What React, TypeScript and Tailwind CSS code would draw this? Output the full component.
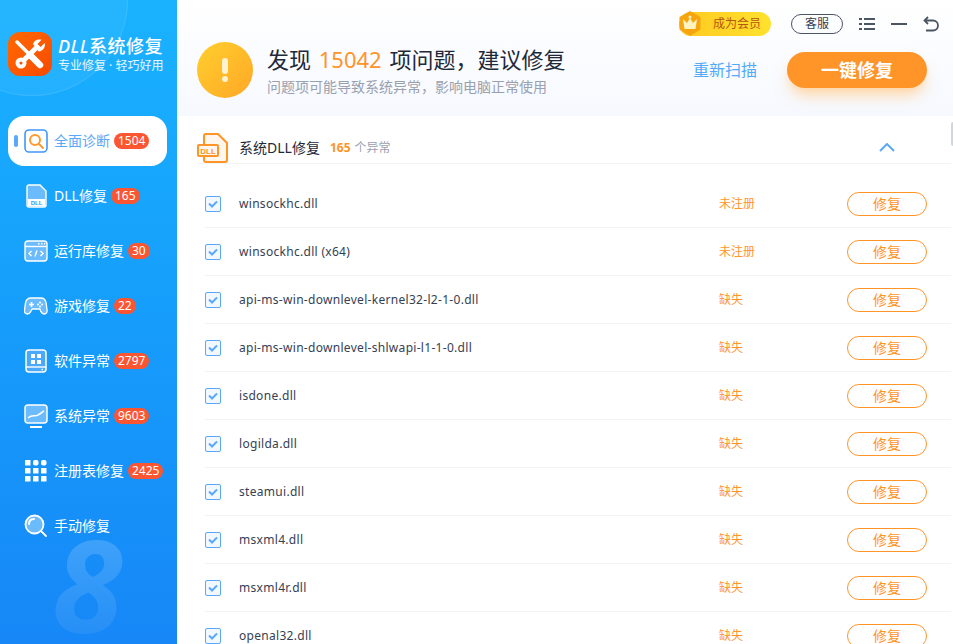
import type { ReactNode } from 'react'

const font = { fontFamily: '"Noto Sans", "Noto Sans CJK SC", sans-serif' }

function SearchBoxIcon() {
  return (
    <svg width="24" height="24" viewBox="0 0 24 24" fill="none">
      <rect x="1" y="1" width="22" height="22" rx="4" stroke="#3f97fb" strokeWidth="1.6" />
      <circle cx="11" cy="11" r="5" stroke="#ff9a2e" strokeWidth="2" />
      <path d="M15 15l4 4" stroke="#ff9a2e" strokeWidth="2" strokeLinecap="round" />
    </svg>
  )
}

function DllIcon() {
  return (
    <svg width="24" height="24" viewBox="0 0 24 24" fill="none">
      <path d="M5 1h11l6 6v14a2 2 0 0 1-2 2H5a2 2 0 0 1-2-2V3a2 2 0 0 1 2-2z" fill="#6cbcfd" stroke="#fff" strokeWidth="1.4" />
      <rect x="4" y="15" width="17" height="7" fill="#fff" />
      <text x="12.5" y="21" textAnchor="middle" fontSize="6" fontWeight="700" fill="#2f9cf8" fontFamily="Liberation Sans">DLL</text>
    </svg>
  )
}

function RuntimeIcon() {
  return (
    <svg width="24" height="24" viewBox="0 0 24 24" fill="none">
      <rect x="1" y="2" width="22" height="20" rx="3" fill="#6cbcfd" stroke="#fff" strokeWidth="1.4" />
      <path d="M1 7.5h22" stroke="#fff" strokeWidth="1.4" />
      <path d="M14 4.8h1.5M17 4.8h1.5M20 4.8h1.2" stroke="#fff" strokeWidth="1.4" />
      <path d="M7.5 12l-2.5 2.5L7.5 17M16.5 12l2.5 2.5-2.5 2.5M13 11.5l-2 6" stroke="#fff" strokeWidth="1.4" />
    </svg>
  )
}

function GameIcon() {
  return (
    <svg width="24" height="20" viewBox="0 0 24 20" fill="none">
      <path d="M7 2h10c3 0 5 2 5.500 5l1 7c.4 2.500-1 4-3 4-1.500 0-2.500-1-3.500-2.500L16 13H8l-1.500 2.500C5.500 17 4.500 18 3 18c-2 0-3.400-1.500-3-4l1-7c.5-3 3-5 6-5z" fill="#6cbcfd" stroke="#fff" strokeWidth="1.4" transform="translate(.5 0) scale(.96 1)" />
      <path d="M5 8.500h5M7.500 6v5" stroke="#fff" strokeWidth="1.6" />
      <circle cx="16" cy="6.500" r="1" fill="#fff" />
      <circle cx="16" cy="10.500" r="1" fill="#fff" />
      <circle cx="14" cy="8.500" r="1" fill="#fff" />
      <circle cx="18" cy="8.500" r="1" fill="#fff" />
    </svg>
  )
}

function SoftwareIcon() {
  return (
    <svg width="22" height="24" viewBox="0 0 22 24" fill="none">
      <rect x="1" y="1" width="20" height="22" rx="3" fill="#4aa9fb" stroke="#fff" strokeWidth="1.5" />
      <rect x="6" y="5" width="4" height="4" fill="#fff" />
      <rect x="12" y="5" width="4" height="4" fill="#fff" />
      <rect x="6" y="11" width="4" height="4" fill="#fff" />
      <rect x="12" y="11" width="4" height="4" fill="#fff" />
      <path d="M1 18h20" stroke="#fff" strokeWidth="1.4" />
      <rect x="16.5" y="19.8" width="1.5" height="1.5" fill="#fff" />
    </svg>
  )
}

function MonitorIcon() {
  return (
    <svg width="24" height="24" viewBox="0 0 24 24" fill="none">
      <rect x="1" y="1" width="22" height="18" rx="3" fill="#6cbcfd" stroke="#fff" strokeWidth="1.5" />
      <path d="M4 14c4-4 7-1 10-3 3-1.500 4-3 6-4" stroke="#fff" strokeWidth="1.5" />
      <path d="M6 23h12" stroke="#fff" strokeWidth="2" />
    </svg>
  )
}

function GridIcon() {
  return (
    <svg width="22" height="22" viewBox="0 0 22 22" fill="#fff">
      {[0, 8, 16].map((y) =>
        [0, 8, 16].map((x) => (
          <rect key={x + '-' + y} x={x} y={y} width="5.5" height="5.5" rx={y === 0 && x > 0 ? 2 : 0.5} />
        )),
      )}
    </svg>
  )
}

function LensIcon() {
  return (
    <svg width="24" height="24" viewBox="0 0 24 24" fill="none">
      <circle cx="10.5" cy="10.5" r="9" fill="#6cbcfd" stroke="#fff" strokeWidth="1.8" />
      <path d="M5 10c0-3 2-5 5-5" stroke="#fff" strokeWidth="2" strokeLinecap="round" />
      <path d="M17.5 17.5l4.500 4.500" stroke="#fff" strokeWidth="1.8" strokeLinecap="round" />
    </svg>
  )
}

function Logo() {
  return (
    <div className="flex h-11 w-11 items-center justify-center rounded-xl bg-gradient-to-br from-orange-500 to-orange-600">
      <svg width="36" height="36" viewBox="0 0 36 36" fill="none">
        {/* screwdriver */}
        <path d="M5 6l12 12" stroke="#fff" strokeWidth="3.5" strokeLinecap="round" />
        <path d="M19 20l9 9" stroke="#fff" strokeWidth="6.5" strokeLinecap="round" />
        {/* wrench */}
        <path d="M26 10L10 26" stroke="#fff" strokeWidth="5" />
        <circle cx="9" cy="27" r="5.5" fill="#fff" />
        <circle cx="9" cy="27" r="1.6" fill="#f4590a" />
        <path d="M21 8c1-3.500 4.500-5.500 8.500-4.200L25.500 8l3 3 4.200-4c1 4-1.500 8-6 8.500z" fill="#fff" />
      </svg>
    </div>
  )
}

const navItems: { label: string; count?: number; icon: ReactNode; active?: boolean }[] = [
  { label: '全面诊断', count: 1504, icon: <SearchBoxIcon />, active: true },
  { label: 'DLL修复', count: 165, icon: <DllIcon /> },
  { label: '运行库修复', count: 30, icon: <RuntimeIcon /> },
  { label: '游戏修复', count: 22, icon: <GameIcon /> },
  { label: '软件异常', count: 2797, icon: <SoftwareIcon /> },
  { label: '系统异常', count: 9603, icon: <MonitorIcon /> },
  { label: '注册表修复', count: 2425, icon: <GridIcon /> },
  { label: '手动修复', icon: <LensIcon /> },
]

const rows = [
  ['winsockhc.dll', '未注册'],
  ['winsockhc.dll (x64)', '未注册'],
  ['api-ms-win-downlevel-kernel32-l2-1-0.dll', '缺失'],
  ['api-ms-win-downlevel-shlwapi-l1-1-0.dll', '缺失'],
  ['isdone.dll', '缺失'],
  ['logilda.dll', '缺失'],
  ['steamui.dll', '缺失'],
  ['msxml4.dll', '缺失'],
  ['msxml4r.dll', '缺失'],
  ['openal32.dll', '缺失'],
]

function Sidebar() {
  return (
    <aside className="relative flex w-[177px] shrink-0 flex-col overflow-hidden bg-gradient-to-b from-[#1ab2ff] to-[#1787f7] pl-2 pr-2.5 text-white">
      <div className="absolute -left-16 -top-24 h-48 w-48 rounded-full border border-white/10 bg-white/5" />
      <div className="absolute -bottom-1 left-13 bg-gradient-to-b from-white/20 to-white/5 bg-clip-text text-9xl font-bold italic leading-none text-transparent">
        8
      </div>
      <div className="relative flex items-center gap-1.5 pb-10 pt-8">
        <Logo />
        <div>
          <div className="whitespace-nowrap text-lg font-medium leading-6 tracking-wide"><span className="italic">DLL</span>系统修复</div>
          <div className="whitespace-nowrap text-xs leading-4 text-white/90">专业修复 · 轻巧好用</div>
        </div>
      </div>
      <nav className="relative flex flex-col gap-1.25">
        {navItems.map((item) => (
          <div
            key={item.label}
            className={
              'relative flex h-12.5 items-center gap-1.5 rounded-2xl pl-4 text-sm ' +
              (item.active ? 'bg-white text-[#5aa9f8]' : 'text-white')
            }
          >
            {item.active && <span className="absolute left-1.5 h-3 w-1 rounded-full bg-[#5aa9f8]" />}
            <span className="flex w-6 justify-center">{item.icon}</span>
            <span className="whitespace-nowrap">{item.label}</span>
            {item.count !== undefined && (
              <span className="-ml-0.5 rounded-full bg-[#fb5532] px-1 text-xs leading-4 text-white">{item.count}</span>
            )}
          </div>
        ))}
      </nav>
    </aside>
  )
}

function Header() {
  return (
    <header className="relative h-29 shrink-0 bg-gradient-to-b from-white to-[#f6f9ff]">
      <div className="flex items-center justify-end gap-4 pr-3.5 pt-3">
        <div className="relative mr-1 flex h-6 w-23 items-center justify-end rounded-full bg-gradient-to-r from-[#ffc91f] to-[#ffe22e] pr-2.5 text-xs text-[#b5560f]">
          <svg className="absolute -left-0.5 -top-px" width="26" height="26" viewBox="0 0 26 26">
            <path d="M13 0l10.500 6v12.500L13 25 2.500 18.500V6z" fill="#f6a50f" />
            <path d="M6 8l4 4 3-5 3 5 4-4-1.500 10h-11z" fill="#fff3c0" />
            <circle cx="13" cy="6" r="1.5" fill="#fff3c0" />
          </svg>
          成为会员
        </div>
        <div className="flex h-5 w-13 items-center justify-center rounded-full border border-gray-600 text-xs text-gray-700">客服</div>
        <svg width="16" height="14" viewBox="0 0 16 14" stroke="#4b5563" strokeWidth="2">
          <path d="M0 2h3M5 2h11M0 7h3M5 7h11M0 12h3M5 12h11" />
        </svg>
        <svg width="16" height="14" viewBox="0 0 16 14" stroke="#4b5563" strokeWidth="2">
          <path d="M0 7h16" />
        </svg>
        <svg width="16" height="16" viewBox="0 0 16 16" fill="none" stroke="#4b5563" strokeWidth="1.8">
          <path d="M5 1L1.500 4.500 5 8M2 4.500h8a4.500 4.500 0 0 1 0 10H3" />
        </svg>
      </div>
      <div className="flex items-center pl-5 pr-6.5 pt-1.5">
        <div className="flex h-14 w-14 items-center justify-center rounded-full bg-gradient-to-br from-[#ffcf2e] to-[#ffa726]">
          <div className="flex flex-col items-center gap-0.5">
            <span className="h-4 w-1.5 rounded-full bg-[#fff2cf]" />
            <span className="h-1.5 w-1.5 rounded-full bg-[#fff2cf]" />
          </div>
        </div>
        <div className="ml-3.5">
          <h1 className="text-[22px] font-normal leading-8 text-gray-800">
            发现 <span className="mx-0.5 text-[#ff9429]">15042</span> 项问题，建议修复
          </h1>
          <p className="mt-0.5 text-sm leading-5 text-gray-400">问题项可能导致系统异常，影响电脑正常使用</p>
        </div>
        <div className="ml-auto text-base text-[#55a9f9]">重新扫描</div>
        <button className="ml-7.5 h-9 w-35 rounded-full bg-[#ff9429] text-lg font-bold text-white shadow-lg shadow-orange-200">一键修复</button>
      </div>
    </header>
  )
}

function SectionHead() {
  return (
    <div className="ml-5 mr-0.5 flex h-12 shrink-0 items-center border-b border-gray-100 pr-14 pt-4">
      <svg width="32" height="32" viewBox="0 0 32 32" fill="none">
        <path d="M9 2h12l9 9v17a2 2 0 0 1-2 2H9a2 2 0 0 1-2-2V4a2 2 0 0 1 2-2z" fill="#fff6ee" stroke="#ff9429" strokeWidth="2" />
        <rect x="1" y="13" width="20" height="11" rx="1" fill="#fff6ee" stroke="#ff9429" strokeWidth="2" />
        <text x="11" y="22" textAnchor="middle" fontSize="8" fontWeight="700" fill="#ff9429" fontFamily="Liberation Sans">DLL</text>
      </svg>
      <span className="ml-2.5 text-sm text-gray-800">系统DLL修复</span>
      <span className="ml-2.5 text-xs font-bold text-[#ff9429]">165</span>
      <span className="ml-1 text-xs text-gray-400">个异常</span>
      <svg className="ml-auto" width="16" height="9" viewBox="0 0 16 9" fill="none" stroke="#5aa9f8" strokeWidth="2">
        <path d="M1 8l7-7 7 7" />
      </svg>
    </div>
  )
}

function Row({ name, status }: { name: string; status: string }) {
  return (
    <div className="ml-7 mr-0.5 flex h-12 shrink-0 items-center border-b border-gray-100 pr-6">
      <span className="flex h-4 w-4 items-center justify-center rounded-xs border border-[#5aa9f8] bg-[#f3f8ff]">
        <svg width="10" height="8" viewBox="0 0 10 8" fill="none" stroke="#5aa9f8" strokeWidth="2">
          <path d="M1 3.500L4 6.500 9 1.500" />
        </svg>
      </span>
      <span className="ml-4.5 flex-1 text-xs tracking-wide text-gray-700">{name}</span>
      <span className="w-32 text-xs text-[#ff9429]">{status}</span>
      <button className="h-6 w-20 rounded-full border border-[#ff9429] text-sm text-[#ff9429]">修复</button>
    </div>
  )
}

export default function App() {
  return (
    <div className="flex h-screen w-full overflow-hidden bg-white" style={font}>
      <Sidebar />
      <main className="relative flex min-w-0 flex-1 flex-col">
        <Header />
        <SectionHead />
        <div className="flex flex-col pt-4">
          {rows.map((r) => (
            <Row key={r[0]} name={r[0]} status={r[1]} />
          ))}
        </div>
        <div className="absolute right-0 top-29 mt-1.5 h-6 w-0.5 rounded-l bg-gray-300" />
      </main>
    </div>
  )
}
